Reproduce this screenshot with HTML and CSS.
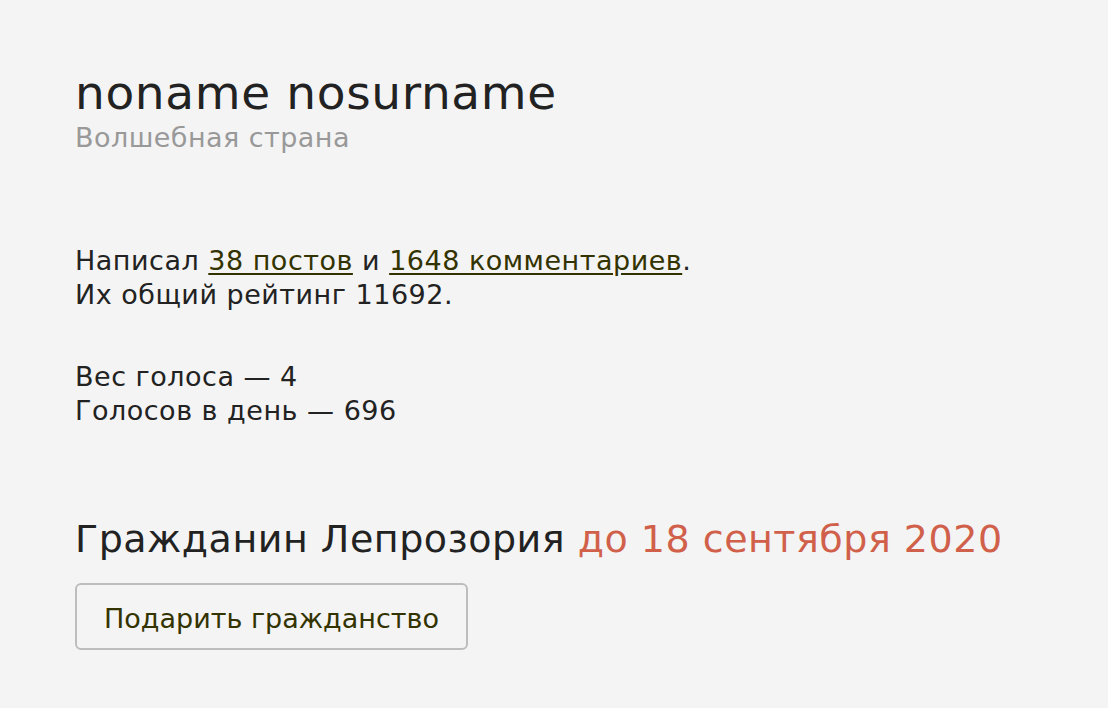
FILE: index.html
```html
<!DOCTYPE html>
<html lang="ru">
<head>
<meta charset="utf-8">
<title>noname nosurname</title>
<link rel="stylesheet" href="styles.css">
</head>
<body>
<main class="profile">
  <header class="profile-head">
    <h1 class="profile-name">noname nosurname</h1>
    <div class="profile-place">Волшебная страна</div>
  </header>
  <section class="stats">
    <p class="stats-block">Написал <a href="#" class="link">38 постов</a> и <a href="#" class="link">1648 комментариев</a>.<br>Их общий рейтинг 11692.</p>
    <p class="stats-block votes">Вес голоса — 4<br>Голосов в день — 696</p>
  </section>
  <section class="citizen">
    <h2 class="citizen-title">Гражданин Лепрозория <span class="citizen-until">до 18 сентября 2020</span></h2>
    <button class="gift-btn" type="button">Подарить гражданство</button>
  </section>
</main>
</body>
</html>
```
FILE: styles.css
```css
html, body {
  margin: 0;
  background: #f4f4f4;
}
body {
  font-family: "DejaVu Sans", Verdana, sans-serif;
  color: #222;
}
.profile {
  padding: 66px 0 0 75px;
}
.profile-name {
  margin: 0;
  font-size: 47px;
  font-weight: normal;
  line-height: 54px;
  letter-spacing: 0.65px;
  color: #222;
}
.profile-place {
  font-size: 27px;
  line-height: 36px;
  letter-spacing: 0.45px;
  color: #999;
}
.stats {
  margin-top: 88px;
}
.stats-block {
  margin: 0;
  font-size: 27px;
  line-height: 34px;
  letter-spacing: 0.5px;
}
.stats-block.votes {
  margin-top: 48px;
}
.link {
  color: #333300;
  text-decoration: underline;
  text-underline-offset: 3px;
}
.citizen {
  margin-top: 87px;
}
.citizen-title {
  margin: 0;
  font-size: 38px;
  font-weight: normal;
  line-height: 48px;
  letter-spacing: 0.5px;
}
.citizen-until {
  color: #d1604b;
}
.gift-btn {
  display: block;
  margin-top: 20px;
  width: 393px;
  height: 67px;
  border: 2px solid #bdbdbd;
  border-radius: 6px;
  background: #f4f4f4;
  color: #333300;
  font-family: "DejaVu Sans", Verdana, sans-serif;
  font-size: 27px;
  padding: 3px 0 0;
  cursor: pointer;
}
```
